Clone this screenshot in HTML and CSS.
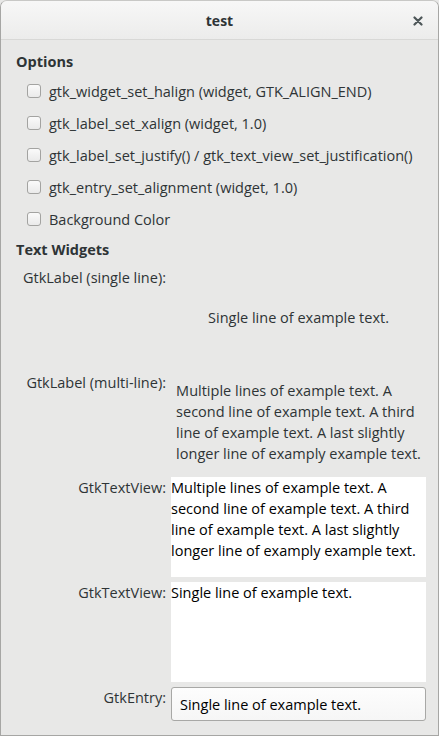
FILE: index.html
```html
<!DOCTYPE html>
<html lang="en">
<head>
  <meta charset="UTF-8" />
  <title>test</title>
  <link rel="stylesheet" href="styles.css">
</head>
<body>

<div class="window">
  <div class="titlebar">
    <span class="title">test</span>
    <svg class="close" width="10" height="10" viewBox="0 0 10 10">
      <path d="M1.5 1.5 L8.5 8.5 M8.5 1.5 L1.5 8.5" stroke="#4d5658" stroke-width="2.2" stroke-linecap="round" />
    </svg>
  </div>

  <div class="content">
    <div class="heading">Options</div>

    <div class="checks">
      <label class="check"><span class="box"></span>gtk_widget_set_halign (widget, GTK_ALIGN_END)</label>
      <label class="check"><span class="box"></span>gtk_label_set_xalign (widget, 1.0)</label>
      <label class="check"><span class="box"></span>gtk_label_set_justify() / gtk_text_view_set_justification()</label>
      <label class="check"><span class="box"></span>gtk_entry_set_alignment (widget, 1.0)</label>
      <label class="check"><span class="box"></span>Background Color</label>
    </div>

    <div class="heading second">Text Widgets</div>

    <div class="widgets">
      <div class="name">GtkLabel (single line):</div>
      <div class="cell centered">Single line of example text.</div>

      <div class="name">GtkLabel (multi-line):</div>
      <div class="cell centered">Multiple lines of example text. A<br>second line of example text. A third<br>line of example text. A last slightly<br>longer line of examply example text.</div>

      <div class="name">GtkTextView:</div>
      <div class="cell textview">Multiple lines of example text. A second line of example text. A third line of example text. A last slightly longer line of examply example text.</div>

      <div class="name">GtkTextView:</div>
      <div class="cell textview">Single line of example text.</div>

      <div class="name">GtkEntry:</div>
      <div class="entry">Single line of example text.</div>
    </div>
  </div>
</div>

</body>
</html>
```

FILE: styles.css
```css
body {
  margin: 0;
  font-family: "Open Sans", "DejaVu Sans", sans-serif;
  font-size: 14.5px;
  color: #2e3436;
  background: #e8e8e7;
}

.window {
  box-sizing: border-box;
  height: 736px;
  border: 1px solid #a6a6a4;
  border-top-color: #c8c8c6;
  border-radius: 7px 7px 0 0;
  background: #e8e8e7;
  overflow: hidden;
}

.titlebar {
  height: 38px;
  display: flex;
  align-items: center;
  justify-content: center;
  position: relative;
  background: linear-gradient(#f7f7f7, #ececeb);
  border-bottom: 1px solid #d8d8d6;
}

.title {
  font-weight: bold;
  font-size: 14px;
  color: #2e3436;
}

.close {
  position: absolute;
  right: 15px;
  top: 15px;
}

.content {
  padding: 12px 12px 0 15px;
}

.heading {
  font-weight: bold;
  line-height: 20px;
}

.checks {
  margin-top: 3px;
  margin-bottom: 5px;
}

.check {
  display: flex;
  align-items: center;
  height: 32px;
  padding-left: 11px;
}

.box {
  width: 12px;
  height: 12px;
  border: 1px solid #a3a3a1;
  border-radius: 3px;
  background: linear-gradient(#fafafa, #eaeaea);
  margin-right: 8px;
  flex-shrink: 0;
}

.widgets {
  margin-top: 7px;
  display: grid;
  grid-template-columns: 150px 255px;
  column-gap: 5px;
  row-gap: 5px;
}

.name {
  text-align: right;
  line-height: 21px;
}

.cell {
  height: 100px;
  line-height: 21px;
}

.centered {
  display: flex;
  align-items: center;
  justify-content: center;
}

.textview {
  background: #fff;
  color: #000;
}

.entry {
  box-sizing: border-box;
  height: 34px;
  padding: 0 8px;
  display: flex;
  align-items: center;
  border: 1px solid #a8a8a6;
  border-radius: 3px;
  background: linear-gradient(#fdfdfd, #f6f6f6);
  color: #000;
}
```
